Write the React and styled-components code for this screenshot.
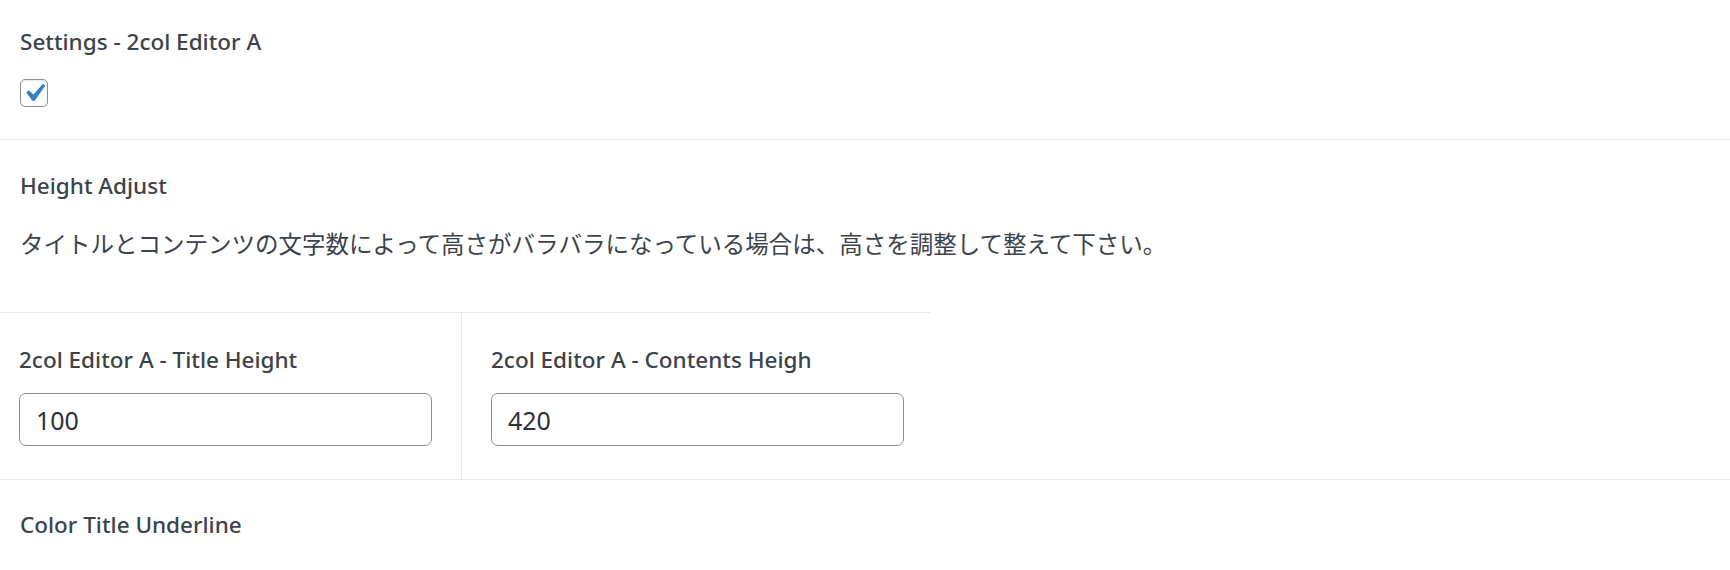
import React from 'react'
import styled, { createGlobalStyle } from 'styled-components'

const GlobalStyle = createGlobalStyle`
  html, body {
    margin: 0;
    padding: 0;
    background: #fff;
  }
  body {
    font-family: 'Noto Sans', 'Noto Sans CJK JP', sans-serif;
    color: #3c434a;
  }
`

const Page = styled.div`
  width: 100%;
  overflow: hidden;
`

const Section = styled.div`
  padding: ${({ $top }) => $top}px 20px ${({ $bottom }) => $bottom}px 20px;
  border-bottom: ${({ $line }) => ($line ? '1px solid #e8e8e8' : 'none')};
`

const FieldLabel = styled.div`
  font-size: 22.5px;
  font-weight: 550;
  line-height: 36px;
  color: #3c434a;
  white-space: nowrap;
`

const Description = styled.p`
  margin: 21px 0 0;
  font-family: 'Noto Sans CJK JP', 'Noto Sans', sans-serif;
  font-size: 23.5px;
  line-height: 36px;
  color: #3c434a;
  white-space: nowrap;
`

const CheckBox = styled.span`
  display: block;
  box-sizing: border-box;
  width: 28px;
  height: 28px;
  margin-top: 19px;
  border: 1px solid #8c8f94;
  border-radius: 5px;
  background: #fff;
  box-shadow: inset 0 1px 2px rgba(0, 0, 0, 0.1);

  svg {
    display: block;
    width: 26px;
    height: 26px;
  }
`

const GridWrap = styled.div`
  border-bottom: 1px solid #e8e8e8;
`

const ColGrid = styled.div`
  display: grid;
  grid-template-columns: 461px 469px;
  width: 930px;
  border-top: 1px solid #e8e8e8;
`

const Cell = styled.div`
  padding: 29px 28px 33px ${({ $first }) => ($first ? 19 : 29)}px;
  border-left: ${({ $first }) => ($first ? 'none' : '1px solid #e8e8e8')};
`

const TextInput = styled.input`
  display: block;
  box-sizing: border-box;
  width: 413px;
  height: 53px;
  margin-top: 15px;
  padding: 0 16px;
  border: 1px solid #8c8f94;
  border-radius: 7px;
  background: #fff;
  font-family: 'Noto Sans', sans-serif;
  font-size: 25px;
  color: #2c3338;
  outline: none;
`

const CheckMark = () => (
  <svg viewBox="2.9 2.9 14.14 14.14" aria-hidden="true">
    <path
      fill="#3582c4"
      d="M14.83 4.89l1.34.94-5.81 8.38H9.02L5.78 9.67l1.34-1.25 2.57 2.4z"
    />
  </svg>
)

const App = () => {
  return (
    <Page>
      <GlobalStyle />
      <Section $top={24} $bottom={32} $line>
        <FieldLabel>Settings - 2col Editor A</FieldLabel>
        <CheckBox role="checkbox" aria-checked="true">
          <CheckMark />
        </CheckBox>
      </Section>

      <Section $top={28} $bottom={51}>
        <FieldLabel>Height Adjust</FieldLabel>
        <Description>
          タイトルとコンテンツの文字数によって高さがバラバラになっている場合は、高さを調整して整えて下さい。
        </Description>
      </Section>

      <GridWrap>
        <ColGrid>
          <Cell $first>
            <FieldLabel>2col Editor A - Title Height</FieldLabel>
            <TextInput type="text" defaultValue="100" />
          </Cell>
          <Cell>
            <FieldLabel>2col Editor A - Contents Heigh</FieldLabel>
            <TextInput type="text" defaultValue="420" />
          </Cell>
        </ColGrid>
      </GridWrap>

      <Section $top={27} $bottom={40}>
        <FieldLabel>Color Title Underline</FieldLabel>
      </Section>
    </Page>
  )
}

export default App
